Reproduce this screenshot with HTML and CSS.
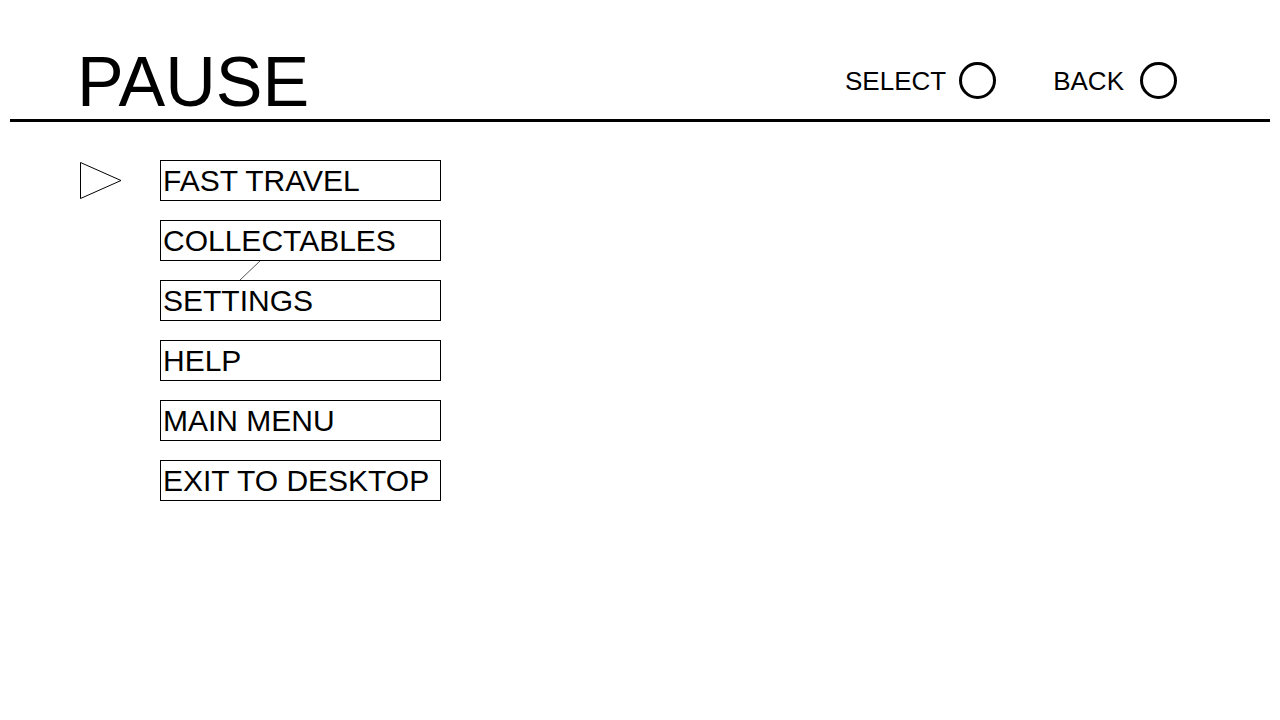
FILE: index.html
```html
<!DOCTYPE html>
<html>
<head>
<meta charset="utf-8">
<link rel="stylesheet" href="styles.css">
</head>
<body>
<header class="header">
  <h1 class="title">PAUSE</h1>
  <div class="controls">
    <div class="control control-select"><span class="control-label">SELECT</span><span class="button-circle"></span></div>
    <div class="control control-back"><span class="control-label">BACK</span><span class="button-circle"></span></div>
  </div>
</header>
<div class="rule"></div>
<main class="menu">
  <svg class="connector" width="24" height="22" viewBox="0 0 24 22"><line x1="21" y1="1" x2="1" y2="20" stroke="#555" stroke-width="1"/></svg>
  <div class="menu-row">
    <div class="cursor-cell"><svg class="cursor" width="42" height="37" viewBox="0 0 42 37"><polygon points="0.5,0.5 41,18.5 0.5,36.5" fill="none" stroke="#000" stroke-width="1"/></svg></div>
    <div class="menu-item">FAST TRAVEL</div>
  </div>
  <div class="menu-row">
    <div class="cursor-cell"></div>
    <div class="menu-item">COLLECTABLES</div>
  </div>
  <div class="menu-row">
    <div class="cursor-cell"></div>
    <div class="menu-item">SETTINGS</div>
  </div>
  <div class="menu-row">
    <div class="cursor-cell"></div>
    <div class="menu-item">HELP</div>
  </div>
  <div class="menu-row">
    <div class="cursor-cell"></div>
    <div class="menu-item">MAIN MENU</div>
  </div>
  <div class="menu-row">
    <div class="cursor-cell"></div>
    <div class="menu-item">EXIT TO DESKTOP</div>
  </div>
</main>
</body>
</html>
```
FILE: styles.css
```css
html, body {
  margin: 0;
  padding: 0;
  background: #fff;
  color: #000;
  font-family: "Liberation Sans", Arial, sans-serif;
}

.header {
  display: flex;
  align-items: flex-start;
  height: 74px;
  padding: 45px 103px 0 77px;
}

.title {
  margin: 1px 0 0 0;
  font-size: 70px;
  line-height: 72px;
  font-weight: normal;
}

.controls {
  margin-left: auto;
  margin-top: 17px;
  display: flex;
  gap: 57px;
}

.control {
  display: flex;
  align-items: center;
}

.control-select {
  gap: 13px;
}

.control-back {
  gap: 16px;
}

.control-label {
  font-size: 26px;
  line-height: 26px;
}

.button-circle {
  display: block;
  width: 31px;
  height: 31px;
  border: 3px solid #000;
  border-radius: 50%;
}

.rule {
  height: 3px;
  margin: 0 10px;
  background: #000;
}

.menu {
  position: relative;
  display: flex;
  flex-direction: column;
  gap: 19px;
  margin-top: 38px;
  padding-left: 80px;
}

.menu-row {
  display: flex;
  align-items: center;
}

.cursor-cell {
  width: 80px;
  height: 41px;
  display: flex;
  align-items: center;
}

.cursor {
  display: block;
}

.menu-item {
  box-sizing: border-box;
  width: 281px;
  height: 41px;
  border: 1px solid #000;
  padding-left: 2px;
  font-size: 30px;
  line-height: 39px;
  white-space: nowrap;
}

.connector {
  position: absolute;
  left: 239px;
  top: 100px;
}
```
